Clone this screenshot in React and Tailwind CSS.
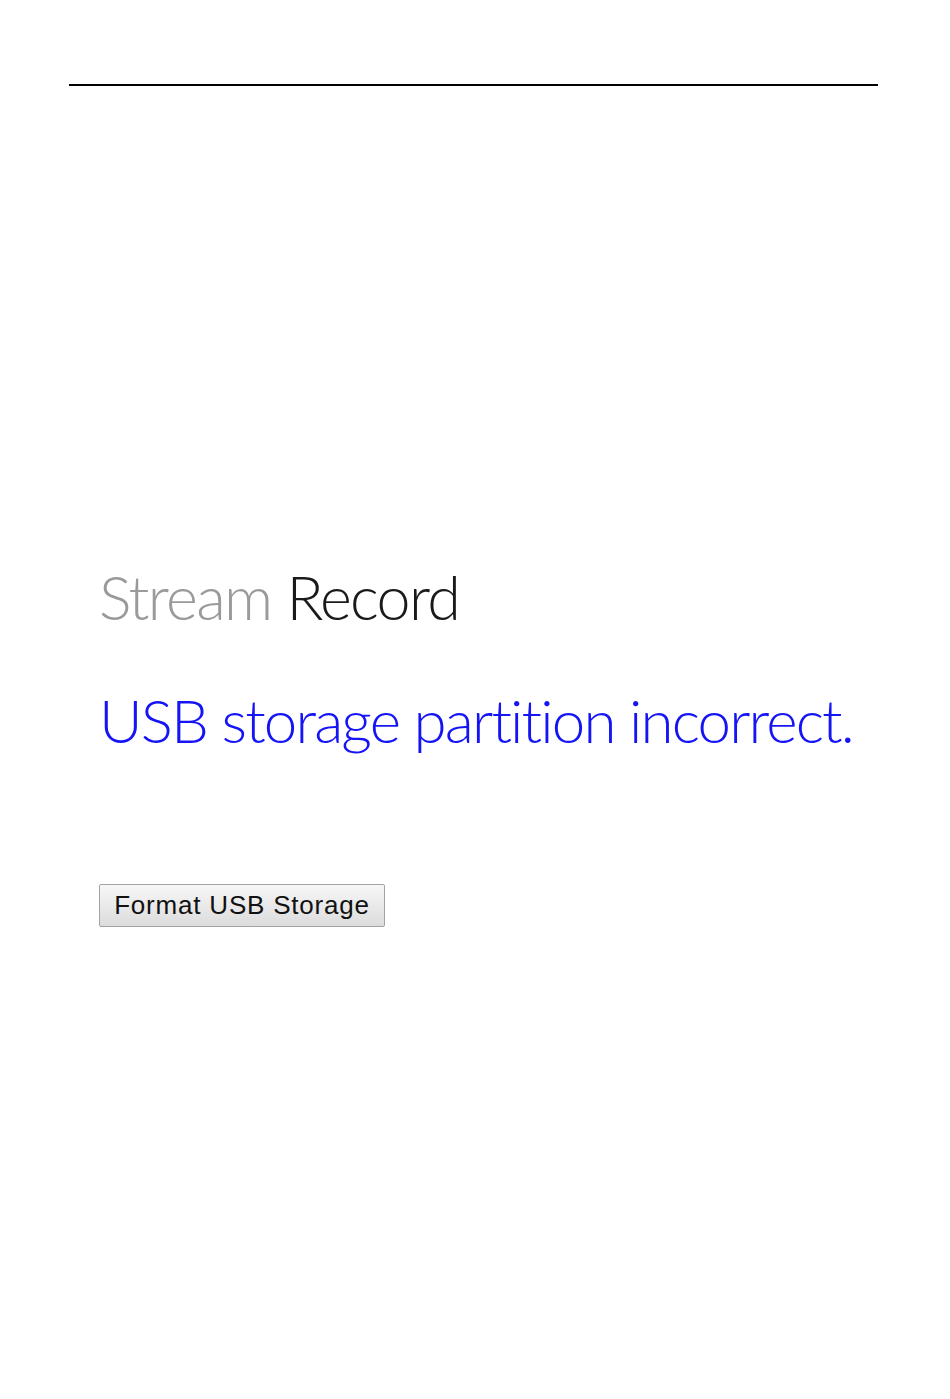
export default function App() {
  return (
    <div className="min-h-[1399px] w-[950px] bg-white">
      <div className="px-[69px] pt-[84px]">
        <div className="h-[2px] w-[809px] bg-black" />
      </div>

      <div className="pl-[99px] pt-[480px]">
        <h1
          className="text-[61px] leading-none font-light tracking-[-1.65px]"
          style={{ fontFamily: 'Lato, "Open Sans", sans-serif' }}
        >
          <span className="text-[#9a9a9a]">Stream</span>{' '}
          <span className="text-[#1a1a1a]">Record</span>
        </h1>

        <p
          className="mt-[63px] text-[60px] leading-none font-light tracking-[-1.85px] text-[#1414f5]"
          style={{ fontFamily: 'Lato, "Open Sans", sans-serif' }}
        >
          USB storage partition incorrect.
        </p>

        <button
          className="mt-[134px] h-[43px] w-[286px] border border-[#a3a3a3] rounded-[2px] bg-gradient-to-b from-[#f7f7f7] to-[#dcdcdc] text-[26px] text-[#111] tracking-[0.8px]"
          style={{ fontFamily: '"Liberation Sans", Arial, sans-serif' }}
        >
          Format USB Storage
        </button>
      </div>
    </div>
  )
}
